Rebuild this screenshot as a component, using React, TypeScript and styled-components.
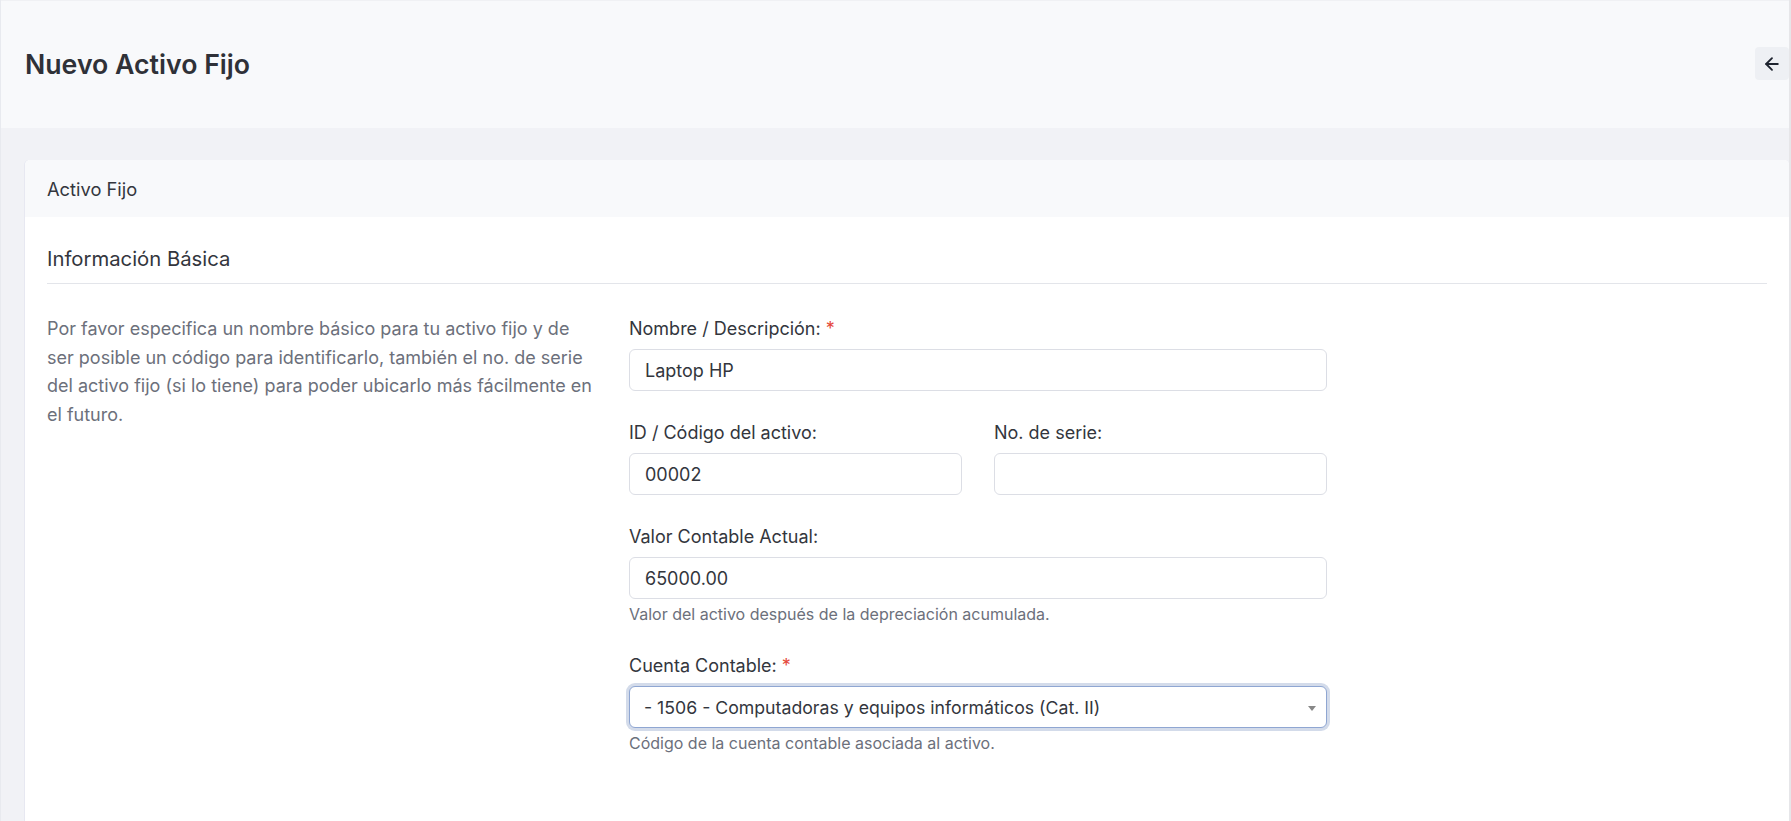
import React from "react";
import styled, { createGlobalStyle } from "styled-components";
import { ArrowLeft } from "lucide-react";

const GlobalStyle = createGlobalStyle`
  html, body {
    margin: 0;
    padding: 0;
    background: #f1f2f6;
  }
  body {
    font-family: Inter, "Noto Sans", "Liberation Sans", sans-serif;
    color: #33363d;
    overflow: hidden;
  }
  * { box-sizing: border-box; }
`;

const Page = styled.div`
  min-height: 821px;
  border-left: 1px solid #e8eaef;
  border-right: 2px solid #e6e6e9;
  background: #f1f2f6;
`;

const Header = styled.header`
  height: 128px;
  background: #f8f9fb;
  border-top: 1px solid #f0f1f4;
  display: flex;
  align-items: center;
  justify-content: space-between;
  padding: 0 0 2px 24px;
`;

const Title = styled.h1`
  margin: 0;
  font-size: 26.7px;
  font-weight: 600;
  color: #2f3138;
`;

const BackButton = styled.button`
  width: 34px;
  height: 33px;
  border: none;
  border-radius: 4px;
  background: #eef0f4;
  color: #1f2430;
  display: flex;
  align-items: center;
  justify-content: center;
  padding: 0;
  cursor: pointer;
`;

const Main = styled.main`
  padding: 32px 0 0 24px;
`;

const Card = styled.section`
  background: #ffffff;
  border-radius: 5px 5px 0 0;
  box-shadow: -1px 0 0 #e7e8f1;
  min-height: 700px;
`;

const CardHeader = styled.div`
  height: 57px;
  background: #f8f9fb;
  border-radius: 5px 5px 0 0;
  display: flex;
  align-items: center;
  padding: 0 22px;
  font-size: 18.3px;
  color: #33363d;
`;

const CardBody = styled.div`
  padding: 30px 22px 40px 22px;
`;

const SectionTitle = styled.h2`
  margin: 0;
  padding-bottom: 12px;
  border-bottom: 1px solid #e3e5ea;
  font-size: 20.3px;
  line-height: 24px;
  font-weight: 400;
  color: #33363d;
`;

const SectionRow = styled.div`
  display: grid;
  grid-template-columns: 553px 698px;
  column-gap: 29px;
  padding-top: 31px;
`;

const Intro = styled.p`
  margin: 0;
  font-size: 18px;
  line-height: 28.5px;
  color: #6c707b;
`;

const Form = styled.div`
  display: flex;
  flex-direction: column;
  gap: 28px;
`;

const TwoCols = styled.div`
  display: grid;
  grid-template-columns: 1fr 1fr;
  column-gap: 32px;
`;

const Group = styled.div`
  display: flex;
  flex-direction: column;
`;

const Label = styled.label`
  font-size: 18px;
  line-height: 28px;
  margin-bottom: 6px;
  color: #33363d;
`;

const Required = styled.span`
  color: #e5483b;
  margin-left: 5px;
`;

const Input = styled.input`
  height: 42px;
  width: 100%;
  border: 1px solid #dcdee5;
  border-radius: 6px;
  padding: 0 15px;
  font-family: inherit;
  font-size: 18px;
  color: #33363d;
  background: #fff;
  outline: none;
`;

const SelectBox = styled.div`
  position: relative;
  height: 42px;
  border: 1px solid #8fa6d2;
  border-radius: 6px;
  box-shadow: 0 0 0 3px #d3dbea;
  display: flex;
  align-items: center;
  padding: 0 36px 0 14px;
  font-size: 17.7px;
  color: #33363d;
  background: #fff;
`;

const Caret = styled.span`
  position: absolute;
  right: 10px;
  top: 50%;
  margin-top: -1px;
  width: 0;
  height: 0;
  border-left: 4px solid transparent;
  border-right: 4px solid transparent;
  border-top: 5px solid #888;
`;

const Help = styled.small`
  margin-top: 5px;
  font-size: 16px;
  line-height: 20px;
  color: #6c707b;
`;

export default function App() {
  return (
    <>
      <GlobalStyle />
      <Page>
        <Header>
          <Title>Nuevo Activo Fijo</Title>
          <BackButton aria-label="Volver">
            <ArrowLeft size={20} strokeWidth={2.2} />
          </BackButton>
        </Header>
        <Main>
          <Card>
            <CardHeader>Activo Fijo</CardHeader>
            <CardBody>
              <SectionTitle>Información Básica</SectionTitle>
              <SectionRow>
                <Intro>
                  Por favor especifica un nombre básico para tu activo fijo y de ser posible un
                  código para identificarlo, también el no. de serie del activo fijo (si lo tiene)
                  para poder ubicarlo más fácilmente en el futuro.
                </Intro>
                <Form>
                  <Group>
                    <Label>
                      Nombre / Descripción:<Required>*</Required>
                    </Label>
                    <Input defaultValue="Laptop HP" />
                  </Group>
                  <TwoCols>
                    <Group>
                      <Label>ID / Código del activo:</Label>
                      <Input defaultValue="00002" />
                    </Group>
                    <Group>
                      <Label>No. de serie:</Label>
                      <Input defaultValue="" />
                    </Group>
                  </TwoCols>
                  <Group>
                    <Label>Valor Contable Actual:</Label>
                    <Input defaultValue="65000.00" />
                    <Help>Valor del activo después de la depreciación acumulada.</Help>
                  </Group>
                  <Group>
                    <Label>
                      Cuenta Contable:<Required>*</Required>
                    </Label>
                    <SelectBox>
                      - 1506 - Computadoras y equipos informáticos (Cat. II)
                      <Caret />
                    </SelectBox>
                    <Help>Código de la cuenta contable asociada al activo.</Help>
                  </Group>
                </Form>
              </SectionRow>
            </CardBody>
          </Card>
        </Main>
      </Page>
    </>
  );
}
